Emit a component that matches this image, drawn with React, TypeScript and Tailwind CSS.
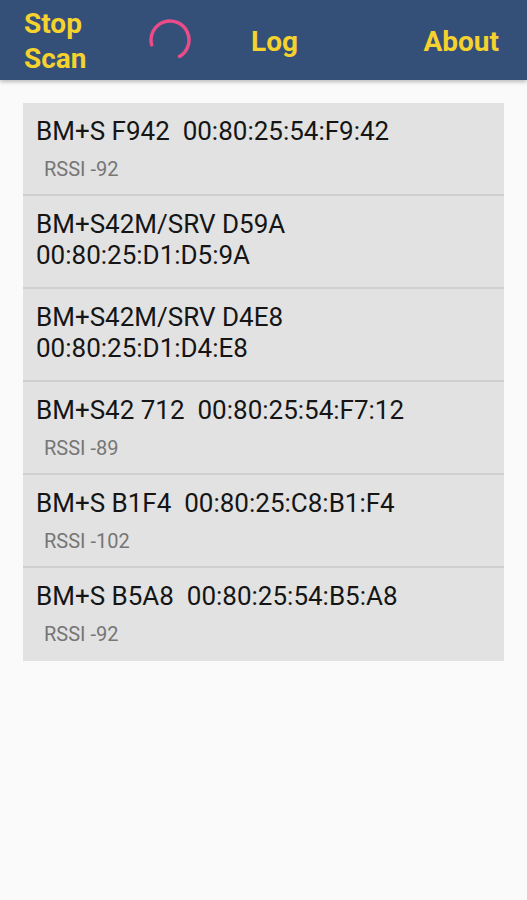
const DEVICES = [
  { lines: ['BM+S F942\u00a0\u00a000:80:25:54:F9:42'], rssi: -92 },
  { lines: ['BM+S42M/SRV D59A', '00:80:25:D1:D5:9A'] },
  { lines: ['BM+S42M/SRV D4E8', '00:80:25:D1:D4:E8'] },
  { lines: ['BM+S42 712\u00a0\u00a000:80:25:54:F7:12'], rssi: -89 },
  { lines: ['BM+S B1F4\u00a0\u00a000:80:25:C8:B1:F4'], rssi: -102 },
  { lines: ['BM+S B5A8\u00a0\u00a000:80:25:54:B5:A8'], rssi: -92 },
]

function Spinner() {
  return (
    <svg width="44" height="44" viewBox="0 0 44 44" fill="none">
      <path
        d="M3.65 26.9 A19 19 0 1 1 31.5 38.45"
        stroke="#ea4c89"
        strokeWidth="3.5"
        strokeLinecap="round"
      />
    </svg>
  )
}

export default function App() {
  return (
    <div className="min-h-[900px] bg-[#fafafa] font-['Roboto',sans-serif]">
      {/* Toolbar */}
      <div className="h-[80px] bg-[#345078] shadow-[0_2px_4px_rgba(0,0,0,0.25)] flex items-center pl-[24px] pr-[28px] text-[#f5d22e] font-bold text-[28px]">
        <div className="leading-[35px] w-[124px] mt-[1px]">
          Stop
          <br />
          Scan
        </div>
        <div className="mt-[0px]">
          <Spinner />
        </div>
        <div className="ml-[59px] mt-[2px] leading-[35px]">Log</div>
        <div className="ml-auto mt-[2px] leading-[35px]">About</div>
      </div>

      {/* Device list */}
      <div className="mx-[23px] mt-[23px] bg-[#e2e2e2]">
        {DEVICES.map((d, i) => (
          <div
            key={i}
            className={
              'h-[93px] px-[13px] pt-[13px] ' +
              (i < DEVICES.length - 1 ? 'border-b-2 border-[#cfcfcf]' : '')
            }
          >
            {d.lines.map((l) => (
              <div key={l} className="text-[26px] leading-[31px] text-[#151515]">
                {l}
              </div>
            ))}
            {d.rssi !== undefined && (
              <div className="mt-[10px] ml-[8px] text-[20px] leading-[24px] text-[#767676]">
                RSSI {d.rssi}
              </div>
            )}
          </div>
        ))}
      </div>
    </div>
  )
}
